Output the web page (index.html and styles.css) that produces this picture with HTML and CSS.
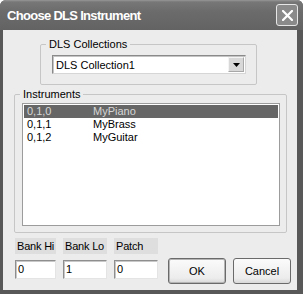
FILE: index.html
```html
<!DOCTYPE html>
<html>
<head>
    <meta charset="utf-8">
    <link rel="stylesheet" href="styles.css">
</head>
<body>
<div class="window">
    <div class="titlebar">
        <span class="title">Choose DLS Instrument</span>
        <span class="close">
            <svg width="11" height="11" viewBox="0 0 11 11"><path d="M1 1 L10 10 M10 1 L1 10" stroke="#fff" stroke-width="2.2" stroke-linecap="square"/></svg>
        </span>
    </div>
    <div class="client">
        <fieldset class="group collections">
            <legend>DLS Collections</legend>
            <div class="combo">
                <span class="combo-text">DLS Collection1</span>
                <span class="combo-btn">
                    <svg width="7" height="4" viewBox="0 0 7 4"><path d="M0 0 H7 L3.5 4 Z" fill="#000"/></svg>
                </span>
            </div>
        </fieldset>
        <fieldset class="group instruments">
            <legend>Instruments</legend>
            <div class="listbox">
                <div class="row selected"><span class="col-id">0,1,0</span><span>MyPiano</span></div>
                <div class="row"><span class="col-id">0,1,1</span><span>MyBrass</span></div>
                <div class="row"><span class="col-id">0,1,2</span><span>MyGuitar</span></div>
            </div>
        </fieldset>
        <div class="footer">
            <div class="field narrow">
                <div class="field-label">Bank Hi</div>
                <div class="input">0</div>
            </div>
            <div class="field">
                <div class="field-label">Bank Lo</div>
                <div class="input">1</div>
            </div>
            <div class="field">
                <div class="field-label">Patch</div>
                <div class="input">0</div>
            </div>
            <div class="buttons">
                <div class="btn default">OK</div>
                <div class="btn">Cancel</div>
            </div>
        </div>
    </div>
</div>
</body>
</html>
```

FILE: styles.css
```css
body {
    margin: 0;
    background: #fff;
    font-family: "Liberation Sans", Arial, sans-serif;
    font-size: 11px;
    color: #000;
}

.window {
    width: 303px;
    height: 294px;
    background: #585858;
    border-radius: 6px 6px 0 0;
    display: flex;
    flex-direction: column;
}

.titlebar {
    height: 30px;
    display: flex;
    align-items: center;
    padding: 0 5px 0 7px;
    border-radius: 6px 6px 0 0;
    background: linear-gradient(#979797 0, #777 2px, #6b6b6b 40%, #636363 100%);
}

.title {
    flex: 1;
    color: #fff;
    font-weight: bold;
    font-size: 13px;
    letter-spacing: -0.7px;
}

.close {
    width: 20px;
    height: 20px;
    border: 1px solid #e6e6e6;
    border-radius: 3px;
    background: #8a8a8a;
    display: flex;
    align-items: center;
    justify-content: center;
}

.client {
    flex: 1;
    margin: 0 6px 4px 3px;
    background: #ececec;
    display: flex;
    flex-direction: column;
}

.group {
    margin: 0;
    border: 1px solid #c6c6c6;
    border-radius: 2px;
    box-sizing: border-box;
}

.group legend {
    padding: 0 3px;
    line-height: 13px;
}

.collections {
    margin: 8px 0 0 37px;
    width: 217px;
    padding: 4px 10px 10px 11px;
}

.collections legend {
    margin-left: -6px;
}

.combo {
    height: 19px;
    box-sizing: border-box;
    border: 1px solid #8a8a8a;
    border-right-color: #d6d6d6;
    border-bottom-color: #d6d6d6;
    box-shadow: inset 1px 1px 0 #c4c4c4;
    background: #fff;
    display: flex;
    align-items: center;
}

.combo-text {
    flex: 1;
    padding-left: 3px;
}

.combo-btn {
    width: 16px;
    height: 15px;
    margin-right: 1px;
    background: #d8d8d8;
    border: 1px solid #f4f4f4;
    border-right-color: #a8a8a8;
    border-bottom-color: #a8a8a8;
    box-sizing: border-box;
    display: flex;
    align-items: center;
    justify-content: center;
}

.instruments {
    margin: 3px 0 0 11px;
    width: 273px;
    padding: 2px 6px 6px 7px;
}

.instruments legend {
    margin-left: -2px;
}

.listbox {
    height: 123px;
    box-sizing: border-box;
    border: 1px solid #9c9c9c;
    background: #fff;
    padding: 1px;
}

.row {
    height: 13px;
    line-height: 13px;
    display: flex;
    padding-left: 3px;
}

.row.selected {
    background: #666;
    color: #d6d6d6;
}

.col-id {
    width: 66px;
}

.footer {
    display: flex;
    align-items: flex-start;
    gap: 7px;
    margin-top: 5px;
    padding-left: 12px;
}

.field {
    width: 44px;
    display: flex;
    flex-direction: column;
    gap: 6px;
}

.field.narrow {
    width: 41px;
}

.field-label {
    height: 16px;
    line-height: 16px;
    padding-left: 2px;
    white-space: nowrap;
    letter-spacing: -0.2px;
    background: #dedede;
}

.input {
    height: 19px;
    line-height: 17px;
    box-sizing: border-box;
    padding-left: 2px;
    background: #fff;
    border: 1px solid #8e8e8e;
    border-right-color: #e4e4e4;
    border-bottom-color: #e4e4e4;
    box-shadow: inset 1px 1px 0 #c8c8c8;
}

.buttons {
    display: flex;
    gap: 7px;
    margin: 20px 0 0 3px;
}

.btn {
    width: 58px;
    height: 26px;
    box-sizing: border-box;
    border: 1px solid #6a6a6a;
    border-radius: 3px;
    background: linear-gradient(#fbfbfb, #ececec 80%, #d8d8d8);
    display: flex;
    align-items: center;
    justify-content: center;
}

.btn.default {
    box-shadow: inset 0 0 0 1px #b4b4b4;
}
```
